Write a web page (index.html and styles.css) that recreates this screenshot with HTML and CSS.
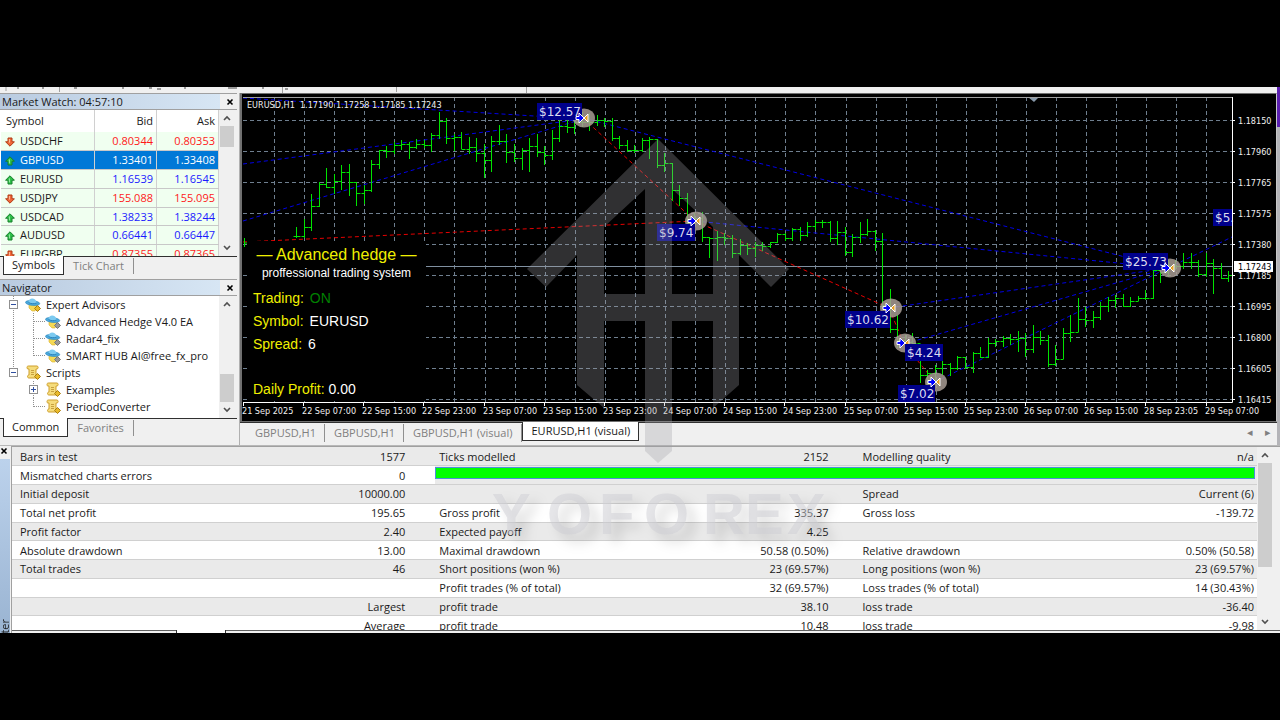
FILE: index.html
```html
<!DOCTYPE html>
<html lang="en">
  <head>
    <meta charset="UTF-8" />
    <meta name="viewport" content="width=device-width, initial-scale=1.0" />
    <title>EURUSD,H1 (visual)</title>
    <link rel="stylesheet" href="styles.css">
  </head>
  <body>
    <!-- Shared icons -->
    <svg class="sprite" aria-hidden="true">
      <symbol id="up" viewBox="0 0 10 10">
        <path d="M5 .8 9.4 5.2H7V9H3V5.2H.6Z" fill="#2fc04a" stroke="#16802b" stroke-width="1" />
        <path d="M4.4 3.4v4" stroke="#9df0a8" stroke-width="1" />
      </symbol>
      <symbol id="down" viewBox="0 0 10 10">
        <path d="M5 9.2 .6 4.8H3V1h4v3.800h2.400Z" fill="#f0683a" stroke="#b03a14" stroke-width="1" />
        <path d="M4.400 2v3.600" stroke="#ffc0a0" stroke-width="1" />
      </symbol>
      <symbol id="expert" viewBox="0 0 16 16">
        <path d="M4 7h8v3l-2 4H7L4 11Z" fill="#f5d954" stroke="#d8b030" stroke-width=".6" />
        <ellipse cx="7.600" cy="6" rx="7.200" ry="2.400" transform="rotate(6 7.600 6)" fill="#4aa8dc" stroke="#2f86bc" stroke-width=".6" />
        <path d="M3.500 5.200C3.500 .2 11 .2 11.600 5.800 9 7 6 6.800 3.500 5.200Z" fill="#7ccaf0" />
        <path d="M3.500 5.500c2 1.300 5.500 1.600 8 .6" fill="none" stroke="#2f86bc" />
      </symbol>
      <symbol id="script" viewBox="0 0 16 16">
        <path d="M2 2.500C2 1 3 1 4 1h8c1.500 0 1.500 3 0 3h-1v6h1v3H4c-2 0-2-3 0-3V4H3C2.300 4 2 3.500 2 2.500Z" fill="#f5dc7c" stroke="#cf9f2c" />
        <path d="M6 5.500h3M6 7.500h3M6 9.500h3" stroke="#c7a040" />
      </symbol>
      <symbol id="chev-up" viewBox="0 0 8 8"><path d="M1 6 4 3l3 3" fill="none" stroke="#505050" stroke-width="1.600" /></symbol>
      <symbol id="chev-down" viewBox="0 0 8 8"><path d="M1 2l3 3 3-3" fill="none" stroke="#505050" stroke-width="1.600" /></symbol>
      <symbol id="close" viewBox="0 0 8 8"><path d="M1.500 1.500l5 5M6.500 1.500l-5 5" stroke="#000" stroke-width="1.600" /></symbol>
    </svg>

    <div class="terminal">
      <div class="toolbar">
        <svg width="600" height="6" viewBox="0 0 600 6" aria-hidden="true">
          <path d="M6 0v4M59.500 0v5M282.500 0v6M396.500 0v5M526.500 0v6" stroke="#a0a0a0" />
          <path d="M17 1h2M42 1h2M74 1h3M122 1h2M149 1h3M157 2h4M184 1h2M228 1h9M262 1h2M285 2h3" stroke="#444" />
        </svg>
      </div>

      <div class="workspace">
        <aside class="sidebar">
          <section class="panel">
            <div class="panel-title">
              <span>Market Watch: 04:57:10</span>
              <button class="close-btn" aria-label="Close Market Watch"><svg><use href="#close" /></svg></button>
            </div>
            <div class="panel-body market-body">
              <div class="market-list">
                <table class="market">
                  <thead>
                    <tr><th>Symbol</th><th>Bid</th><th>Ask</th></tr>
                  </thead>
                  <tbody>
                    <tr class="fall"><td><svg><use href="#down" /></svg>USDCHF</td><td>0.80344</td><td>0.80353</td></tr>
                    <tr class="selected"><td><svg><use href="#up" /></svg>GBPUSD</td><td>1.33401</td><td>1.33408</td></tr>
                    <tr class="rise"><td><svg><use href="#up" /></svg>EURUSD</td><td>1.16539</td><td>1.16545</td></tr>
                    <tr class="fall"><td><svg><use href="#down" /></svg>USDJPY</td><td>155.088</td><td>155.095</td></tr>
                    <tr class="rise"><td><svg><use href="#up" /></svg>USDCAD</td><td>1.38233</td><td>1.38244</td></tr>
                    <tr class="rise"><td><svg><use href="#up" /></svg>AUDUSD</td><td>0.66441</td><td>0.66447</td></tr>
                    <tr class="fall"><td><svg><use href="#down" /></svg>EURGBP</td><td>0.87355</td><td>0.87365</td></tr>
                  </tbody>
                </table>
              </div>
              <div class="scrollbar">
                <button aria-label="Scroll up"><svg><use href="#chev-up" /></svg></button>
                <div class="track"><div class="thumb thumb-market"></div></div>
                <button aria-label="Scroll down"><svg><use href="#chev-down" /></svg></button>
              </div>
            </div>
            <div class="tabs">
              <button class="tab active">Symbols</button>
              <button class="tab">Tick Chart</button>
            </div>
          </section>

          <section class="panel">
            <div class="panel-title">
              <span>Navigator</span>
              <button class="close-btn" aria-label="Close Navigator"><svg><use href="#close" /></svg></button>
            </div>
            <div class="panel-body nav-body">
              <ul class="tree">
                <li>
                  <div class="node"><i class="toggle minus"></i><svg><use href="#expert" /><path d="M12.500 8.500l3 3-3 3-3-3z" fill="#e8b92c" stroke="#a97f12" /></svg>Expert Advisors</div>
                  <ul>
                    <li><div class="node"><i class="branch"></i><svg><use href="#expert" /><path d="M12.500 8.500l3 3-3 3-3-3z" fill="#999" stroke="#777" /></svg>Advanced Hedge V4.0 EA</div></li>
                    <li><div class="node"><i class="branch"></i><svg><use href="#expert" /><path d="M12.500 8.500l3 3-3 3-3-3z" fill="#999" stroke="#777" /></svg>Radar4_fix</div></li>
                    <li><div class="node"><i class="branch"></i><svg><use href="#expert" /><path d="M12.500 8.500l3 3-3 3-3-3z" fill="#999" stroke="#777" /></svg>SMART HUB AI@free_fx_pro</div></li>
                  </ul>
                </li>
                <li>
                  <div class="node"><i class="toggle minus"></i><svg><use href="#script" /><path d="M12.500 8.500l3 3-3 3-3-3z" fill="#e8b92c" stroke="#a97f12" /></svg>Scripts</div>
                  <ul>
                    <li><div class="node"><i class="toggle plus"></i><svg><use href="#script" /><path d="M12.500 8.500l3 3-3 3-3-3z" fill="#e8b92c" stroke="#a97f12" /></svg>Examples</div></li>
                    <li><div class="node"><i class="branch"></i><svg><use href="#script" /><path d="M12.500 8.500l3 3-3 3-3-3z" fill="#e8b92c" stroke="#a97f12" /></svg>PeriodConverter</div></li>
                  </ul>
                </li>
              </ul>
              <div class="scrollbar">
                <button aria-label="Scroll up"><svg><use href="#chev-up" /></svg></button>
                <div class="track track-end"><div class="thumb thumb-nav"></div></div>
                <button aria-label="Scroll down"><svg><use href="#chev-down" /></svg></button>
              </div>
            </div>
            <div class="tabs">
              <button class="tab active">Common</button>
              <button class="tab">Favorites</button>
            </div>
          </section>
        </aside>

        <main class="chart-column">
          <div class="chart-window">
            <svg class="chart" id="chart" viewBox="242 96 1034 325" role="img" aria-label="EURUSD,H1 price chart"></svg>
            <div class="ea-panel">
              <h2>— Advanced hedge —</h2>
              <p>proffessional trading system</p>
              <dl>
                <div><dt>Trading:</dt><dd class="on">ON</dd></div>
                <div><dt>Symbol:</dt><dd>EURUSD</dd></div>
                <div><dt>Spread:</dt><dd>6</dd></div>
                <div class="profit"><dt>Daily Profit:</dt><dd>0.00</dd></div>
              </dl>
            </div>
          </div>
          <div class="tabs chart-tabs">
            <button class="tab">GBPUSD,H1</button>
            <button class="tab">GBPUSD,H1</button>
            <button class="tab">GBPUSD,H1 (visual)</button>
            <button class="tab active">EURUSD,H1 (visual)</button>
            <div class="tab-scroll">
              <button aria-label="Previous chart">◂</button>
              <button aria-label="Next chart">▸</button>
            </div>
          </div>
        </main>
        <div class="edge"></div>
      </div>

      <section class="tester">
        <div class="tester-side">
          <button class="close-btn" aria-label="Close Tester"><svg><use href="#close" /></svg></button>
          <div class="tester-title"><span>Tester</span></div>
        </div>
        <div class="report-area">
          <div class="report-scroll">
            <table class="report">
              <colgroup><col class="c1"><col class="c2"><col class="c3"><col class="c2"><col class="c3"><col class="c2"></colgroup>
              <tbody>
                <tr><td>Bars in test</td><td>1577</td><td>Ticks modelled</td><td>2152</td><td>Modelling quality</td><td>n/a</td></tr>
                <tr><td>Mismatched charts errors</td><td>0</td><td colspan="4" class="quality"><div class="quality-bar"></div></td></tr>
                <tr><td>Initial deposit</td><td>10000.00</td><td></td><td></td><td>Spread</td><td>Current (6)</td></tr>
                <tr><td>Total net profit</td><td>195.65</td><td>Gross profit</td><td>335.37</td><td>Gross loss</td><td>-139.72</td></tr>
                <tr><td>Profit factor</td><td>2.40</td><td>Expected payoff</td><td>4.25</td><td></td><td></td></tr>
                <tr><td>Absolute drawdown</td><td>13.00</td><td>Maximal drawdown</td><td>50.58 (0.50%)</td><td>Relative drawdown</td><td>0.50% (50.58)</td></tr>
                <tr><td>Total trades</td><td>46</td><td>Short positions (won %)</td><td>23 (69.57%)</td><td>Long positions (won %)</td><td>23 (69.57%)</td></tr>
                <tr><td></td><td></td><td>Profit trades (% of total)</td><td>32 (69.57%)</td><td>Loss trades (% of total)</td><td>14 (30.43%)</td></tr>
                <tr><td></td><td>Largest</td><td>profit trade</td><td>38.10</td><td>loss trade</td><td>-36.40</td></tr>
                <tr><td></td><td>Average</td><td>profit trade</td><td>10.48</td><td>loss trade</td><td>-9.98</td></tr>
              </tbody>
            </table>
            <div class="scrollbar">
              <button aria-label="Scroll up"><svg><use href="#chev-up" /></svg></button>
              <div class="track"><div class="thumb thumb-report"></div></div>
              <button aria-label="Scroll down"><svg><use href="#chev-down" /></svg></button>
            </div>
          </div>
          <div class="report-tabs"><i></i><i></i><i></i></div>
        </div>
      </section>

      <!-- Brand watermark over the whole terminal -->
      <svg class="watermark" viewBox="480 130 370 430" aria-hidden="true">
        <path fill-rule="evenodd" d="M658 139 789 269 771 287 739 255V385L713 408V321H672V451L658 463 645 451V321H604V408L577 385V255L546 287 527 269ZM645 189V294H604V227ZM672 189V294H713V227Z" />
        <text y="534" x="492 547 599 644 703 745 787">YOFOREX</text>
      </svg>
    </div>

    <script src="chart.js"></script>
  </body>
</html>
```
FILE: styles.css
```css
* {
  box-sizing: border-box;
}

body {
  margin: 0;
  padding: 87px 0;
  height: 100vh;
  background-color: #000;
  color: #1a1a1a;
  font-family: "Open Sans", "Noto Sans", sans-serif;
  font-size: 11px;
}

button {
  border: none;
  padding: 0;
  background: none;
  font: inherit;
  color: inherit;
  cursor: pointer;
}

ul,
dl,
p,
h2 {
  margin: 0;
  padding: 0;
}

.sprite {
  position: absolute;
  width: 0;
  height: 0;
}

.terminal {
  position: relative;
  display: flex;
  flex-direction: column;
  height: 100%;
  overflow: hidden;
  background-color: #f0f0f0;
}

/* Toolbar */
.toolbar {
  display: flex;
  height: 6px;
  flex: none;
  border-right: 3px solid #5b1fb0;
}

.workspace {
  display: flex;
  flex: none;
  border-bottom: 1px solid #b8b8b8;
}

/* Sidebar */
.sidebar {
  display: flex;
  flex-direction: column;
  gap: 1px;
  width: 240px;
  flex: none;
  padding-right: 2px;
  border-right: 1px solid #b0b0b0;
}

.panel {
  border-top: 1px solid #a0a0a0;
}

.panel-title {
  display: flex;
  justify-content: space-between;
  align-items: center;
  height: 16px;
  padding: 0 2px;
  border-bottom: 1px solid #a0a0a0;
  background: linear-gradient(90deg, #b9cbe0, #d7e6f4 93%, #f0f0f0 93%);
  line-height: 14px;
}

.close-btn {
  display: flex;
  padding: 1px;
}

.close-btn svg {
  width: 8px;
  height: 8px;
}

.panel-body {
  display: flex;
  overflow: hidden;
  background-color: #fff;
}

.market-body {
  height: 146px;
  padding-left: 1px;
}

.nav-body {
  height: 122px;
}

.market-list {
  flex: 1;
  overflow: hidden;
}

.market {
  width: 100%;
  height: 154px;
  table-layout: fixed;
  border-collapse: collapse;
  line-height: 16px;
}

.market th,
.market td {
  padding: 0 3px;
  border-right: 1px solid #d0d0d0;
  text-align: right;
}

.market th {
  height: 22px;
  width: 62px;
  font-weight: normal;
}

.market th:first-child,
.market td:first-child {
  width: auto;
  padding-left: 4px;
  text-align: left;
}

.market th:first-child {
  padding-left: 5px;
}

.market td {
  height: 18px;
  border-bottom: 1px solid #c8c8c8;
  background-color: #f0fff0;
}

.market td svg {
  width: 10px;
  height: 10px;
  margin-right: 5px;
  vertical-align: -2px;
}

.market .fall td + td {
  color: #ff1a1a;
}

.market .rise td + td {
  color: #1a1aff;
}

.market .selected td {
  background-color: #0078d7;
  color: #fff;
}

/* Scrollbars */
.scrollbar {
  display: flex;
  flex-direction: column;
  width: 18px;
  flex: none;
  padding: 0 3px 0 1px;
  background-color: #f0f0f0;
}

.scrollbar button {
  display: flex;
  justify-content: center;
  align-items: center;
  height: 16px;
}

.scrollbar svg {
  width: 8px;
  height: 8px;
}

.track {
  display: flex;
  flex: 1;
  flex-direction: column;
}

.track-end {
  justify-content: flex-end;
}

.thumb {
  background-color: #cdcdcd;
}

.thumb-market {
  height: 21px;
}

.thumb-nav {
  height: 28px;
}

.thumb-report {
  height: 104px;
}

/* Tabs */
.tabs {
  display: flex;
  align-items: flex-start;
  height: 22px;
  padding: 0 3px;
  border-top: 1px solid #303030;
  color: #808080;
  line-height: 16px;
}

.tab {
  margin-top: 1px;
  padding: 0 9px;
  border-right: 1px solid #909090;
}

.tab.active {
  margin-top: -1px;
  padding: 1px 8px;
  border: 1px solid #303030;
  border-top: none;
  background-color: #fff;
  color: #1a1a1a;
}

/* Navigator tree */
.tree {
  flex: 1;
  padding-left: 9px;
  list-style: none;
}

.tree ul {
  padding-left: 20px;
  list-style: none;
}

.tree > li {
  background: repeating-linear-gradient(#909090 0 1px, transparent 1px 2px) 4px 0 / 1px 100% no-repeat;
}

.tree > li:last-child {
  background-size: 1px 10px;
}

.tree ul li {
  background: repeating-linear-gradient(#909090 0 1px, transparent 1px 2px) 4px 0 / 1px 100% no-repeat;
}

.tree ul li:last-child {
  background-size: 1px 9px;
}

.node {
  display: flex;
  align-items: center;
  height: 17px;
  white-space: nowrap;
}

.node svg {
  width: 16px;
  height: 16px;
  margin-right: 5px;
}

.branch {
  width: 12px;
  margin-left: 4px;
  border-top: 1px dotted #909090;
}

.toggle {
  width: 9px;
  height: 9px;
  margin-right: 7px;
  border: 1px solid #909090;
  background: linear-gradient(#3050a0, #3050a0) center / 5px 1px no-repeat #fff;
}

.toggle.plus {
  background: linear-gradient(#3050a0, #3050a0) center / 5px 1px no-repeat, linear-gradient(#3050a0, #3050a0) center / 1px 5px no-repeat #fff;
}

/* Chart window */
.chart-column {
  display: flex;
  flex-direction: column;
  flex: 1;
  min-width: 0;
}

.chart-window {
  position: relative;
  border: 1px solid #c8c8c8;
  border-width: 1px 1px 1px 2px;
  border-color: #707070 #c8c8c8 #707070 #707070;
  padding-top: 2px;
  background-color: #000;
}

.chart {
  display: block;
  width: 100%;
  height: auto;
}

.grid {
  stroke: #6f7f8f;
  stroke-dasharray: 4 3;
}

.axis {
  fill: none;
  stroke: #fff;
}

.axis-text {
  fill: #f0f0f0;
  font: 9px "DejaVu Sans Condensed", "DejaVu Sans", sans-serif;
}

.bars {
  fill: none;
  stroke: #00e400;
}

.trade {
  stroke-dasharray: 4 3;
}

.trade.buy {
  stroke: #0000e6;
}

.trade.loss {
  stroke: #e60000;
}

.tag {
  fill: #00008b;
}

.tag-text {
  fill: #dcdcf0;
  font: 12px "DejaVu Sans", sans-serif;
}

/* Expert advisor info shown over the chart */
.ea-panel {
  position: absolute;
  left: 5px;
  top: 147px;
  width: 179px;
  height: 160px;
  padding: 3px 6px;
  background-color: #000;
  color: #fff;
  font-family: "Liberation Sans", Arial, sans-serif;
  font-size: 14px;
}

.ea-panel h2 {
  color: #f0f000;
  font-size: 16px;
  font-weight: normal;
  line-height: 22px;
  text-align: center;
  white-space: nowrap;
}

.ea-panel p {
  font-size: 12px;
  line-height: 15px;
  text-align: center;
}

.ea-panel dl {
  padding-top: 6px;
}

.ea-panel dl div {
  display: flex;
  gap: 6px;
  line-height: 23px;
}

.ea-panel dt {
  color: #f0f000;
}

.ea-panel dd {
  margin: 0;
}

.ea-panel .on {
  color: #008000;
}

.ea-panel .profit {
  gap: 4px;
  padding-top: 22px;
}

.chart-tabs {
  height: 23px;
  padding: 0 6px;
  line-height: 18px;
}

.chart-tabs .tab {
  padding: 0 8px 0 9px;
}

.tab-scroll {
  display: flex;
  gap: 12px;
  margin-left: auto;
}

.edge {
  width: 3px;
  background: linear-gradient(#5b1fb0 34px, #b4b4b8 34px);
}

/* Strategy tester report */
.tester {
  display: flex;
  flex: 1;
  min-height: 0;
}

.tester-side {
  display: flex;
  flex-direction: column;
  align-items: flex-start;
  width: 11px;
  flex: none;
}

.tester-side .close-btn {
  padding: 1px 0 4px;
}

.tester-title {
  display: flex;
  align-items: flex-end;
  width: 10px;
  flex: 1;
  overflow: hidden;
  background: linear-gradient(#bcd2ec, #9ab4d2);
}

.tester-title span {
  margin-bottom: -18px;
  writing-mode: vertical-rl;
  transform: rotate(180deg);
  line-height: 10px;
}

.report-area {
  display: flex;
  flex-direction: column;
  flex: 1;
  min-width: 0;
  border-top: 1px solid #a0a0a0;
  border-left: 1px solid #a0a0a0;
}

.report-scroll {
  display: flex;
  flex: 1;
  min-height: 0;
  overflow: hidden;
  padding-right: 5px;
}

.report {
  flex: 1;
  height: 188px;
  table-layout: fixed;
  border-collapse: collapse;
  line-height: 15px;
  white-space: nowrap;
}

.report td {
  height: 18px;
  padding: 0 3px 0 4px;
  border-bottom: 1px solid #d0d0d0;
}

.report td:first-child {
  padding-left: 8px;
}

.report td:nth-child(even) {
  text-align: right;
}

.report tr:nth-child(odd) {
  background-color: #eaeaea;
}

.report tr:nth-child(even) {
  background-color: #fff;
}

.report td:nth-child(2),
.report td:nth-child(4) {
  padding-right: 30px;
}

.c1 {
  width: 16%;
}

.c2 {
  width: 18%;
}

.c3 {
  width: 16%;
}

.report .quality {
  padding: 1px 2px 0 0;
  background-color: #eaeaea;
  vertical-align: top;
}

.quality-bar {
  height: 12px;
  border: 1px solid #4a90d9;
  background-color: #00ff00;
}

.report-tabs {
  display: grid;
  grid-template-columns: 164px 50px 1fr;
  height: 3px;
  background-color: #fff;
}

.report-tabs i {
  border-top: 1px solid #606060;
  background-color: #f0f0f0;
}

.report-tabs i:nth-child(2) {
  border: 1px solid #303030;
  border-width: 0 1px;
  background-color: #fff;
}

/* Watermark */
.watermark {
  position: absolute;
  left: 480px;
  top: 43px;
  width: 370px;
  height: 430px;
  pointer-events: none;
}

.watermark path {
  fill: rgba(160, 160, 164, 0.3);
}

.watermark text {
  fill: rgba(205, 205, 212, 0.5);
  font: bold 58px "Liberation Sans", Arial, sans-serif;
  filter: drop-shadow(9px 8px 6px rgba(0, 0, 0, 0.25));
}
```
FILE: chart.js
```js
const chart = document.getElementById("chart");
const left = 243;
const right = 1232;
const top_ = 97;
const bottom = 402;

// high, low, close of each hourly bar
const bars = [
  [227,238,236],[219,238,227],[194,231,206],[182,207,184],[168,188,187],[174,194,181],[165,190,172],[164,196,182],
  [182,206,193],[185,204,190],[160,192,164],[150,169,150],[146,158,151],[142,154,145],[140,150,144],[142,159,147],
  [139,149,144],[140,148,145],[133,152,135],[112,139,121],[118,144,138],[134,151,137],[132,149,149],[137,154,147],
  [138,162,153],[144,178,160],[136,172,141],[125,145,141],[134,163,152],[144,162,158],[148,170,150],[138,172,146],
  [134,157,152],[146,165,155],[130,160,138],[118,142,126],[120,133,127],[118,134,122],[112,127,122],[113,131,122],
  [115,126,120],[118,127,121],[118,141,138],[136,149,145],[140,152,150],[145,153,150],[138,152,140],[137,159,139],
  [139,168,165],[153,172,163],[163,201,190],[185,206,198],[193,227,223],[213,232,218],[212,242,237],[237,258,238],
  [231,261,237],[233,245,238],[235,258,253],[239,255,245],[243,255,248],[242,257,245],[242,251,246],[242,248,242],
  [233,243,234],[233,241,238],[228,241,229],[227,241,235],[222,237,226],[220,230,222],[220,228,222],[221,242,238],
  [221,245,232],[227,256,252],[234,257,237],[222,243,234],[219,236,231],[230,251,241],[233,307,305],[289,333,329],
  [315,348,340],[335,350,342],[333,347,343],[360,383,375],[370,387,373],[365,383,368],[355,375,364],[363,376,368],
  [356,370,357],[357,369,367],[352,373,353],[347,358,357],[338,358,343],[339,347,341],[336,347,338],[334,345,339],
  [331,352,338],[333,357,349],[325,353,337],[331,345,340],[335,367,364],[345,366,359],[328,359,333],[315,342,332],
  [298,332,319],[307,327,320],[311,328,317],[302,320,306],[297,312,300],[295,308,298],[294,307,306],[297,307,301],
  [296,301,298],[290,300,298],[268,299,270],[263,283,272],[260,277,266],[260,270,266],[253,269,262],[253,269,262],
  [260,277,274],[253,277,263],[259,294,268],[263,279,278],[271,282,275]
];

const trades = [
  ["buy", 243, 98, 583, 119], ["buy", 243, 164, 583, 119], ["buy", 243, 221, 583, 119],
  ["buy", 583, 118, 1168, 268], ["buy", 695, 221, 1168, 268], ["buy", 889, 308, 1168, 268],
  ["buy", 904, 344, 1168, 268], ["buy", 935, 382, 1168, 268], ["buy", 1168, 268, 1232, 237],
  ["loss", 243, 242, 695, 221], ["loss", 583, 118, 695, 221], ["loss", 695, 221, 889, 308],
  ["loss", 889, 308, 904, 344], ["loss", 904, 344, 935, 382]
];

const markers = [[583, 118], [695, 221], [890, 308], [904, 343], [935, 382], [1169, 268]];

// text, x, y, width
const tags = [
  ["$12.57", 537, 103, 45], ["$9.74", 657, 224, 38], ["$10.62", 845, 311, 45], ["$4.24", 905, 344, 38],
  ["$7.02", 898, 385, 37], ["$25.73", 1123, 253, 45], ["$5.", 1213, 209, 19]
];

const times = [
  "21 Sep 2025", "22 Sep 07:00", "22 Sep 15:00", "22 Sep 23:00", "23 Sep 07:00", "23 Sep 15:00", "23 Sep 23:00",
  "24 Sep 07:00", "24 Sep 15:00", "24 Sep 23:00", "25 Sep 07:00", "25 Sep 15:00", "25 Sep 23:00", "26 Sep 07:00",
  "26 Sep 15:00", "28 Sep 23:05", "29 Sep 07:00"
];

const prices = [
  "1.18150", "1.17960", "1.17765", "1.17575", "1.17380", "1.17185", "1.16995", "1.16800", "1.16605", "1.16415"
];

let svg = "";

// grid
let grid = "";
for (let i = 0; i < 32; i++) {
  const x = Math.round(274 + i * 30.08) + 0.5;
  grid += `M${x} ${top_}V${bottom}`;
}
prices.forEach((p, i) => {
  grid += `M${left} ${120.5 + i * 31}H${right}`;
});
svg += `<path class="grid" d="${grid}" />`;
svg += `<path d="M426 266.500H${right}" stroke="#8090a0" />`;
svg += `<path d="M1028 97h11l-5 5z" fill="#8899aa" />`;

// trade lines
trades.forEach(([kind, x1, y1, x2, y2]) => {
  svg += `<line class="trade ${kind}" x1="${x1}" y1="${y1}" x2="${x2}" y2="${y2}" />`;
});

// bars
let path = "M244.500 238V247M244 243h3";
bars.forEach(([high, low, close], i) => {
  const x = Math.round(296 + i * 7.517) + 0.5;
  const open = i ? bars[i - 1][2] : close;
  path += `M${x} ${high}V${low}M${x - 3} ${open + 0.5}H${x}M${x} ${close + 0.5}h4`;
});
svg += `<path class="bars" d="${path}" />`;

// order markers
markers.forEach(([x, y]) => {
  svg += `<g transform="translate(${x} ${y})">
    <ellipse cx="1" rx="11" ry="9.500" fill="#a89c94" fill-opacity="0.85" />
    <path d="M5-4v8L1 0z" fill="#e8a020" stroke="#fff" />
  </g>`;
});

// profit tags, the order arrows stay on top of them
tags.forEach(([text, x, y, w]) => {
  svg += `<rect class="tag" x="${x}" y="${y}" width="${w}" height="17" />`;
  svg += `<text class="tag-text" x="${x + 2}" y="${y + 13}">${text}</text>`;
});
markers.forEach(([x, y]) => {
  svg += `<path transform="translate(${x} ${y})" d="M-7-1.500h3V-5L1 0-4 5V1.500h-3z" fill="#0000ff" stroke="#fff" />`;
});

// axes
svg += `<path d="M${left} 97.500H${right}" stroke="#a0a0a0" />`;
svg += `<path class="axis" d="M${right + 0.5} 97V${bottom + 0.5}H${left}" />`;
times.forEach((t, i) => {
  const x = Math.round(243 + i * 60.16);
  svg += `<path class="axis" d="M${x + 0.5} ${bottom}v4" /><text class="axis-text" x="${x - 1}" y="414">${t}</text>`;
});
prices.forEach((p, i) => {
  const y = 120 + i * 31;
  svg += `<path class="axis" d="M${right} ${y + 0.5}h3" /><text class="axis-text" x="1238" y="${y + 4}">${p}</text>`;
});
svg += `<rect x="1234" y="261" width="39" height="11" fill="#fff" />`;
svg += `<text class="axis-text" x="1238" y="270" style="fill: #000">1.17243</text>`;
svg += `<text class="axis-text" x="247" y="108">EURUSD,H1&#160; 1.17190 1.17258 1.17185 1.17243</text>`;

chart.innerHTML = svg;
```
